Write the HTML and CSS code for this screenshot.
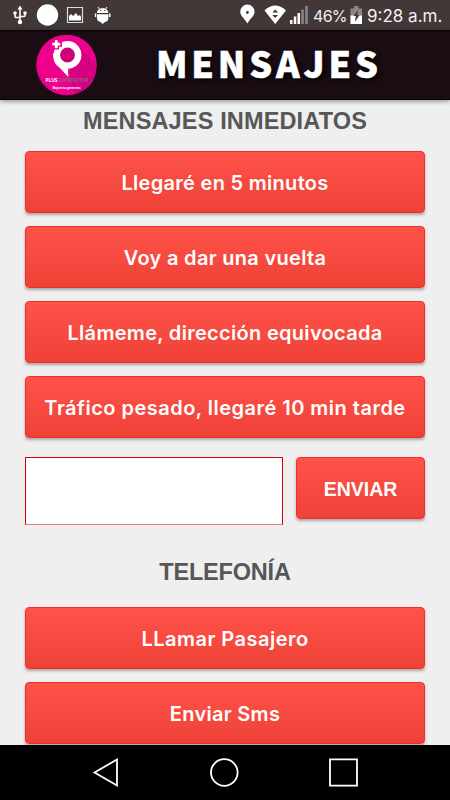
FILE: index.html
```html
<!DOCTYPE html>
<html lang="es">
<head>
  <meta charset="UTF-8">
  <meta name="viewport" content="width=device-width, initial-scale=1.0">
  <title>Mensajes</title>
  <link rel="stylesheet" href="styles.css">
</head>
<body>
  <div class="status-bar">
    <svg class="status-left" width="112" height="30" viewBox="0 0 112 30">
      <g fill="none" stroke="#fff" stroke-width="1.6">
        <path d="M20 8v13M15 13v3.500q0 1 1 1h4M25 12v3.500q0 1-1 1h-4"/>
        <path d="M67.500 7.500h15v15h-15z" stroke="#ddd" stroke-width="1.2"/>
        <path d="M98 7l2 3M107 7l-2 3" stroke-width="1"/>
      </g>
      <g fill="#fff">
        <path d="M20 5.500l2.500 4h-5zM23.500 11.500h3v3h-3z"/>
        <circle cx="15" cy="13" r="1.800"/>
        <circle cx="20" cy="22" r="2.200"/>
        <circle cx="47.500" cy="15" r="10.700"/>
        <path d="M69 20.500V16l2-2 2 2 3-3 2 3 2-1 1 2v3.500z"/>
        <path d="M97 13c0-6.500 11.400-6.500 11.400 0zM97 14.200h11.400v4q0 3.200-3.500 3.700l-2.200 2-2.200-2q-3.500-.5-3.500-3.700zM94.800 13.500h1.500v3.500h-1.500zM109 13.500h1.500v3.500H109z"/>
      </g>
      <path d="M100 10.500h1.200M104.300 10.500h1.200" stroke="#413837" stroke-width="1.200"/>
    </svg>
    <div class="status-right">
      <svg width="70" height="30" viewBox="0 0 70 30">
        <path d="M7.400 23.500C4 18 .2 15.500.2 11.800a7.200 7.200 0 0 1 14.400 0c0 3.700-3.800 6.200-7.200 11.700z" fill="#fff"/>
        <circle cx="7.400" cy="12.500" r="1.400" fill="#413837"/>
        <path d="M24.500 10.500Q35.200.5 46 10.500L35.200 24z" fill="#fff"/>
        <path d="M32.300 12.500l2.900-3 2.900 3zM32.300 15l2.900 3 2.900-3z" fill="#413837"/>
        <path d="M50 20h2.500v4H50zM53.800 16.500h2.500V24h-2.500zM57.500 13h2.500v11h-2.500z" fill="#fff"/>
        <path d="M61.300 9.500h2.500V24h-2.500zM65.200 6h2.600v18h-2.600z" fill="#8b8685"/>
      </svg>
      <span class="battery-level">46%</span>
      <svg class="battery" width="13" height="30" viewBox="0 0 13 30">
        <path d="M4 6h4.500v2.500H12V24H.500V8.500H4z" fill="#8b8685"/>
        <path d="M.500 15.500H12V24H.500z" fill="#fff"/>
        <path d="M8 10l-4.500 6h2.300L5 22l4.600-7H7.200z" fill="#413837"/>
      </svg>
      <span class="clock">9:28 a.m.</span>
    </div>
  </div>

  <header>
    <svg class="logo" width="62" height="62" viewBox="0 0 62 62">
      <circle cx="30.500" cy="31" r="30.300" fill="#ef008c"/>
      <path d="M42 12L59.500 28Q63 53 39 60L33 42z" fill="#d60083"/>
      <path d="M17 19c0 9 3 12 6.500 14.500L32.300 43l-.3-9z" fill="#fff"/>
      <circle cx="31.500" cy="21" r="10.700" fill="#ce0078" stroke="#fff" stroke-width="6.500"/>
      <path d="M20.500 5v10.500M15.500 10.200h10.500" stroke="#ef008c" stroke-width="5"/>
      <path d="M20.300 6.200v8M16.300 10.200h8" stroke="#fff" stroke-width="2.800"/>
      <text class="logo-name" x="9.500" y="47.500" textLength="12" lengthAdjust="spacingAndGlyphs">PLUS</text>
      <text class="logo-name logo-gray" x="22.500" y="47.500" textLength="30" lengthAdjust="spacingAndGlyphs">CONDUCTOR</text>
      <text class="logo-slogan" x="16.500" y="54.500" textLength="28" lengthAdjust="spacingAndGlyphs">Mejora tus ganancias</text>
    </svg>
    <h1>MENSAJES</h1>
  </header>

  <main>
    <h2>MENSAJES INMEDIATOS</h2>
    <div class="buttons">
      <button type="button" class="btn">Llegaré en 5 minutos</button>
      <button type="button" class="btn">Voy a dar una vuelta</button>
      <button type="button" class="btn">Llámeme, dirección equivocada</button>
      <button type="button" class="btn btn-long">Tráfico pesado, llegaré 10 min tarde</button>
    </div>
    <form class="send-row">
      <input type="text" class="message" aria-label="Mensaje">
      <button type="button" class="btn btn-send">ENVIAR</button>
    </form>
    <h2 class="phone-title">TELEFONÍA</h2>
    <div class="buttons">
      <button type="button" class="btn btn-long">LLamar Pasajero</button>
      <button type="button" class="btn">Enviar Sms</button>
    </div>
  </main>

  <nav class="nav-bar">
    <svg width="450" height="55" viewBox="0 0 450 55" fill="none" stroke="#fff" stroke-width="1.800">
      <path d="M117 14.500v26L94.500 27.500z"/>
      <circle cx="224.300" cy="27.500" r="13.300"/>
      <path d="M330 14.300h27v26.400h-27z"/>
    </svg>
  </nav>
</body>
</html>
```
FILE: styles.css
```css
* {
  box-sizing: border-box;
}
body {
  display: flex;
  flex-direction: column;
  width: 450px;
  height: 800px;
  margin: 0;
  overflow: hidden;
  background-color: #efefef;
  font-family: Inter, "Liberation Sans", sans-serif;
}
svg {
  display: block;
  flex: none;
}
.status-bar {
  display: flex;
  justify-content: space-between;
  height: 30px;
  flex: none;
  background-color: #413837;
  color: #f2f0f0;
}
.status-right {
  display: flex;
  width: 210px;
  line-height: 32px;
  white-space: nowrap;
}
.battery-level {
  width: 38px;
  padding-left: 3px;
  font-size: 16px;
  letter-spacing: -0.7px;
}
.battery {
  margin-left: 2px;
}
.clock {
  padding-left: 4px;
  font-size: 17px;
}
header {
  display: flex;
  align-items: flex-start;
  height: 70px;
  flex: none;
  padding: 2px 0 0 36px;
  background-color: #190c12;
  border-top: 2px solid #12070c;
  border-bottom: 1px solid #000;
  box-shadow: 0 1px 5px rgba(0, 0, 0, 0.45);
}
.logo-name {
  font: bold 5px "Open Sans", sans-serif;
  fill: #fff;
}
.logo-gray {
  fill: #88687b;
}
.logo-slogan {
  font: bold 3px "Open Sans", sans-serif;
  fill: #fff;
}
h1 {
  margin: 0 0 0 58px;
  color: #fff;
  font: 900 36px/56px "Noto Sans CJK JP", "Open Sans", sans-serif;
  letter-spacing: 3.800px;
  text-shadow: 2px 2px 4px #000;
  -webkit-text-stroke: 0.500px #fff;
}
main {
  flex: 1;
  min-height: 0;
  padding: 0 25px;
  overflow: hidden;
}
h2 {
  margin: 7px 0 16px;
  color: #575757;
  font: bold 23.500px/28px "Liberation Sans", sans-serif;
  letter-spacing: 0.150px;
  text-align: center;
}
.phone-title {
  margin: 33px 0 21px;
  letter-spacing: -0.200px;
}
.buttons {
  display: flex;
  flex-direction: column;
  gap: 13px;
}
.btn {
  width: 100%;
  height: 62px;
  flex: none;
  padding: 2px 0 0;
  border: 1px solid #f62e20;
  border-radius: 4px;
  background: linear-gradient(#ff5249, #ee4238);
  box-shadow: 0 2px 3px rgba(0, 0, 0, 0.3);
  color: #fff;
  font: 600 20px Inter, sans-serif;
  letter-spacing: 0.300px;
}
.btn-long {
  letter-spacing: 0.480px;
}
.send-row {
  display: flex;
  gap: 13px;
  margin-top: 19px;
}
.message {
  width: 258px;
  height: 68px;
  border: 1px solid #d40000;
  border-bottom-color: #e37b7b;
  background-color: #fff;
}
.btn-send {
  width: 129px;
  font: bold 19.500px "Liberation Sans", sans-serif;
  letter-spacing: 0;
}
.nav-bar {
  height: 55px;
  flex: none;
  background-color: #000;
}
```
